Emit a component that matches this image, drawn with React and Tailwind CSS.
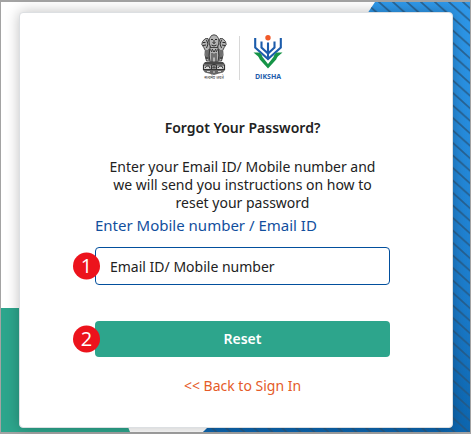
function Emblem() {
  return (
    <svg width="26" height="48" viewBox="0 0 26 48" role="img" aria-label="State emblem">
      <g fill="#b4b4b4" stroke="#383838" strokeWidth="0.9">
        <path d="M8.500 4.500 10.500 1.500 13 .8l2.500.700 2 3 .800 5-1.800 3.500L13 15l-3.500-2-1.800-3.500z" />
        <path d="M7 4.500 4 4.800 1.500 7.500.8 10.500l2 3 1.500 3L4 21l1.500 6h4l.8-8L9 12z" />
        <path d="m19 4.500 3 .300 2.500 2.700.700 3-2 3-1.500 3L22 21l-1.500 6h-4l-.8-8L17 12z" />
        <path d="M9 13.500h8l1 8-1.200 6.500H9.200L8 21.500z" />
      </g>
      <g fill="none" stroke="#2c2c2c" strokeWidth="1">
        <path d="M10 5.500h2m2 0h2M11.500 8.500 13 9.500l1.500-1M10.500 11l2.500 1 2.500-1M13 6v3" />
        <path d="M2 8.500h2.500M2 11.500l3-.5M5.500 6l1.500 4-1.500 4M24 8.500h-2.500m2.500 3-3-.5M20.500 6 19 10l1.500 4" />
        <path d="M9.500 15.500 11 18m0-3 2 3 2-3m1.500.5L15 18M6 16v9m2-10v11m10-11v11m2-10v9" />
        <path d="M11 19v9m4-9v9M13 19.500v4M4.500 24h3m11 0h3" />
      </g>
      <path d="M4 28h18l2 2.500H2z" fill="#484848" />
      <g fill="#d8d8d8" stroke="#333" strokeWidth="1.200">
        <path d="M2.500 31h21v4.500h-21z" />
        <circle cx="13" cy="33.200" r="2.700" />
      </g>
      <path d="m4 34 1.500-2L8 32l1 2.500M17 34l1.500-2 2.500.2 1 2.300M13 30.500v5.400M10.300 33.200h5.400" stroke="#333" fill="none" />
      <path d="M2 36h22l-2 2.500-4 1-5 1.500-5-1.500-4-1z" fill="#666" />
      <path d="M6 37.500h3m3 .5h2m3-.5h3" stroke="#d5d5d5" />
      <text x="13" y="45" textAnchor="middle" fontSize="4" fill="#333" fontFamily="'Noto Sans', sans-serif">
        सत्यमेव जयते
      </text>
    </svg>
  );
}

function Diksha() {
  return (
    <svg width="32" height="48" viewBox="0 0 32 48" role="img" aria-label="DIKSHA">
      <circle cx="16" cy="3.800" r="2.700" fill="#f15a29" />
      <g fill="none" stroke="#1c5cab" strokeWidth="2.100">
        <path d="M3.200 4v9.500L16 25 28.800 13.500V4" />
        <path d="M9.500 7.500v6L16 19.500l6.500-6v-6M16 8.500V25" />
      </g>
      <path
        d="M1.500 18.500h4.500c2.500 0 3.700 2 4.500 4.500L16 30l5.500-7c.8-2.500 2-4.500 4.500-4.500h4.500l-3.500 3c-1.500 1-2 2-2.800 4L16 34.500l-8.200-9c-.8-2-1.300-3-2.800-4z"
        fill="#169447"
      />
      <text x="16" y="45" textAnchor="middle" fontSize="7" fontWeight="700" fill="#1c5cab" fontFamily="'Open Sans', sans-serif">
        DIKSHA
      </text>
    </svg>
  );
}

function Backdrop() {
  return (
    <svg className="absolute inset-0 h-full w-full" viewBox="0 0 469 430" preserveAspectRatio="none" aria-hidden="true">
      <defs>
        <linearGradient id="sky" x1="0" y1="0" x2="0" y2="1">
          <stop offset="0" stopColor="#2e97e8" />
          <stop offset="0.700" stopColor="#1b7bca" />
          <stop offset="1" stopColor="#0c65ae" />
        </linearGradient>
        <pattern id="stripes" width="14" height="12.500" patternUnits="userSpaceOnUse">
          <path d="M-14-12.500 28 25M-14 0 14 25M0-12.500 28 12.500" stroke="#28587f" strokeOpacity="0.800" strokeWidth="1.700" />
        </pattern>
      </defs>
      <path d="M374 0h95v430H202l4-4 148-396z" fill="url(#sky)" />
      <path d="M374 0h95v430H202l4-4 148-396z" fill="url(#stripes)" />
      <path d="M0 306h80l49 124H0z" fill="#2da58c" />
    </svg>
  );
}

function Badge({ children }) {
  return (
    <span className="absolute top-1/2 -left-[22px] flex size-[27px] -translate-y-1/2 items-center justify-center rounded-full bg-[#ec131c] pb-0.5 font-['Open_Sans',sans-serif] text-xl leading-none text-white">
      {children}
    </span>
  );
}

export default function App() {
  return (
    <main className="relative border-x border-y-2 border-[#a3a3a3] bg-white pt-[10px] pr-[17px] pb-1 pl-[18px] font-['Noto_Sans',sans-serif] text-sm text-[#222]">
      <Backdrop />
      <form
        onSubmit={(e) => e.preventDefault()}
        className="relative rounded border border-[#dcdfe2] bg-white pt-[21px] pr-[62px] pb-8 pl-[75px] shadow-[0_0_14px_rgba(0,0,0,0.25)]"
      >
        <div className="flex h-12 items-center justify-center gap-3">
          <Emblem />
          <span className="h-11 w-px bg-[#d8d8d8]" />
          <Diksha />
        </div>
        <h1 className="mt-9 text-center leading-5 font-semibold">Forgot Your Password?</h1>
        <p className="mt-5 px-2 text-center leading-[18px]">
          Enter your Email ID/ Mobile number and we will send you instructions on how to reset your password
        </p>
        <label htmlFor="contact" className="mt-[3px] block text-[15px] leading-5 text-[#124f9e]">
          Enter Mobile number / Email ID
        </label>
        <div className="relative mt-3">
          <input
            id="contact"
            type="text"
            placeholder="Email ID/ Mobile number"
            className="block h-[38px] w-full rounded border border-[#024f9d] bg-white px-[14px] placeholder:text-[#222] outline-none"
          />
          <Badge>1</Badge>
        </div>
        <div className="relative mt-9">
          <button type="submit" className="block h-9 w-full rounded bg-[#2da58c] font-semibold text-white">
            Reset
          </button>
          <Badge>2</Badge>
        </div>
        <div className="mt-5 text-center leading-[18px]">
          <a href="#signin" className="text-[#e55b28]">
            &lt;&lt; Back to Sign In
          </a>
        </div>
      </form>
    </main>
  );
}
